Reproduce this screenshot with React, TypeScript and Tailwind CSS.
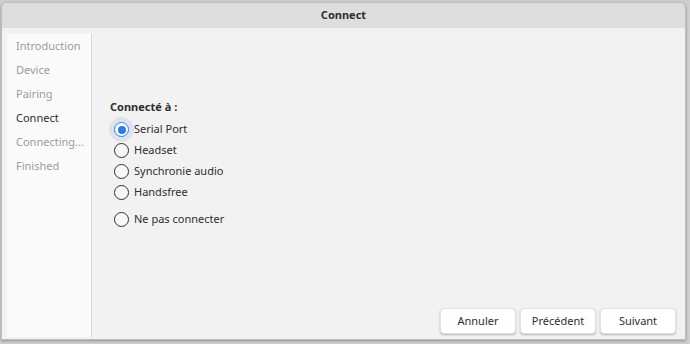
const steps = [
  { label: "Introduction", active: false },
  { label: "Device", active: false },
  { label: "Pairing", active: false },
  { label: "Connect", active: true },
  { label: "Connecting...", active: false },
  { label: "Finished", active: false },
];

const options = ["Serial Port", "Headset", "Synchronie audio", "Handsfree"];

const Radio = ({ checked }: { checked?: boolean }) => {
  if (checked) {
    return (
      <span className="relative flex h-[15px] w-[15px] items-center justify-center">
        <span className="absolute -inset-[5px] rounded-full bg-[#dce3ee]" />
        <span className="relative flex h-[15px] w-[15px] items-center justify-center rounded-full border-[1.5px] border-[#2f7ae5] bg-white">
          <span className="h-[8px] w-[8px] rounded-full bg-[#2f7ae5]" />
        </span>
      </span>
    );
  }
  return <span className="h-[15px] w-[15px] rounded-full border-[1.5px] border-[#303030] bg-[#f7f7f7]" />;
};

const Button = ({ text }: { text: string }) => (
  <button className="h-[26px] w-[76px] rounded-[4px] bg-white text-[11px] text-[#2e2e2e] shadow-[0_1px_2px_rgba(0,0,0,0.25)] border border-[#e2e2e2]">
    {text}
  </button>
);

export default function App() {
  return (
    <div
      className="w-[690px] h-[344px] overflow-hidden bg-[#cfcfcf] pl-[1px] pt-[2px] pr-[4px] pb-[4px] flex"
      style={{ fontFamily: '"Noto Sans", "Open Sans", sans-serif' }}
    >
      <div className="flex flex-1 flex-col rounded-t-[6px] border border-[#bdbdbd] shadow-[0_1px_3px_rgba(0,0,0,0.3)] overflow-hidden">
        <div className="flex h-[25px] items-center justify-center bg-[#dedede] text-[11px] font-bold text-[#2e2e2e]">
          Connect
        </div>
        <div className="flex flex-1 bg-[#f2f2f2] pl-[5px] pt-[6px] pb-[2px]">
          <div className="w-[85px] bg-[#fafafa] border-r border-[#d9d9d9]">
            {steps.map((s) => (
              <div
                key={s.label}
                className={`flex h-[24px] items-center pl-[9px] text-[11px] ${
                  s.active ? "text-[#2e2e2e]" : "text-[#9c9c9c]"
                }`}
              >
                {s.label}
              </div>
            ))}
          </div>
          <div className="flex flex-1 flex-col pl-[18px] pr-[9px] pb-[3px]">
            <div className="mt-[64px] text-[11px] font-bold text-[#2e2e2e] h-[18px] flex items-center">
              Connecté à :
            </div>
            <div className="mt-[3px] flex flex-col">
              {options.map((o, i) => (
                <div key={o} className="flex h-[21px] items-center gap-[5px] pl-[4px] text-[11px] text-[#2e2e2e]">
                  <Radio checked={i === 0} />
                  <span>{o}</span>
                </div>
              ))}
              <div className="mt-[6px] flex h-[21px] items-center gap-[5px] pl-[4px] text-[11px] text-[#2e2e2e]">
                <Radio />
                <span>Ne pas connecter</span>
              </div>
            </div>
            <div className="mt-auto flex justify-end gap-[4px]">
              <Button text="Annuler" />
              <Button text="Précédent" />
              <Button text="Suivant" />
            </div>
          </div>
        </div>
      </div>
    </div>
  );
}
